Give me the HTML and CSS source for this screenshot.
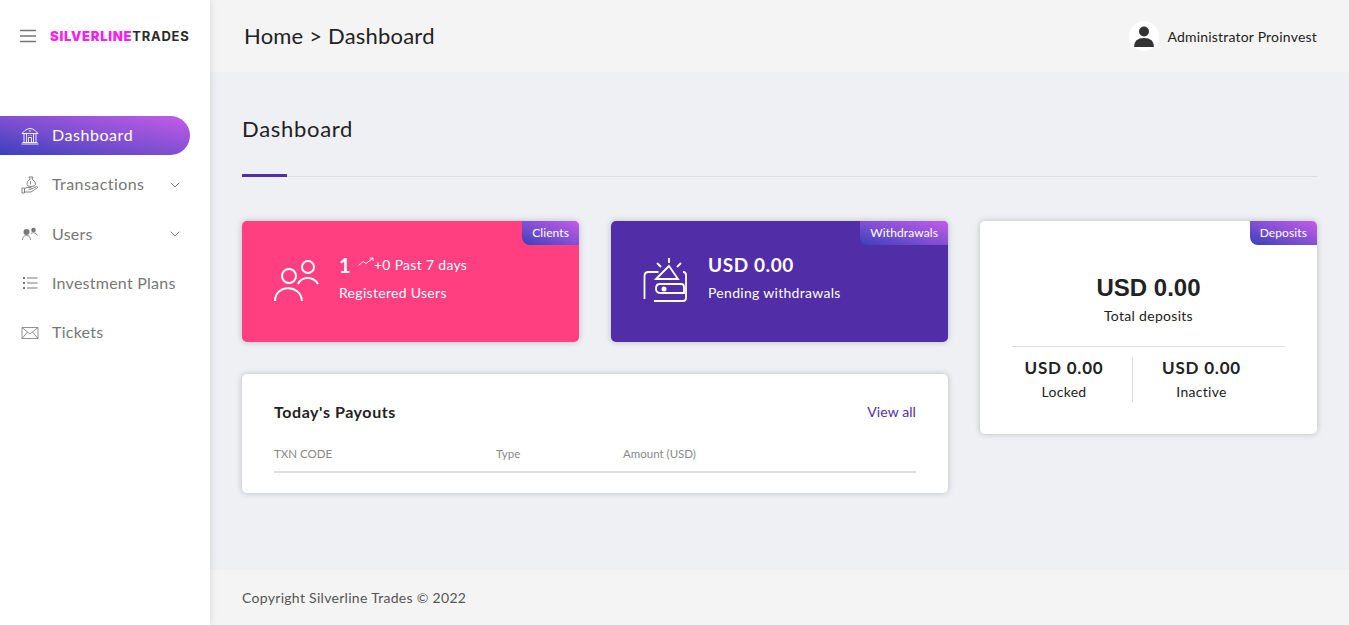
FILE: index.html
```html
<!DOCTYPE html>
<html>
    <head>
        <title>Dashboard</title>
        <link rel="stylesheet" href="styles.css">
    </head>
    <body>
        <div class="layout">
            <aside class="sidebar">
                <div class="brand">
                    <svg class="burger" width="16" height="14" viewBox="0 0 16 14"><path d="M0 1.5h16M0 7h16M0 12.5h16" stroke="#777" stroke-width="1.6" fill="none"/></svg>
                    <span class="logo"><b>SILVERLINE</b>TRADES</span>
                </div>
                <ul class="menu">
                    <li class="menu-item active">
                        <svg class="menu-icon" viewBox="0 0 18 18" fill="none" stroke="currentColor" stroke-width=".9"><path d="M1 6.5 4 3.5Q9-.5 14 3.500l3 3zM3 6.500v9M5.500 6.500v9M12.500 6.500v9M15 6.500v9M7.500 15.500v-5h3v5M7.500 8.500h.8M9.700 8.500h.8M9 3v2M1.500 15.500h15M.5 17h17"/></svg>
                        <span>Dashboard</span>
                    </li>
                    <li class="menu-item">
                        <svg class="menu-icon" viewBox="0 0 18 18" fill="none" stroke="currentColor" stroke-width=".9"><path d="M8 1h4l-1 2q4 2.500 3.500 5.500-.5 2-4.500 2T6 8.500Q5.500 5.500 9 3zM9.500 5v3.500"/><path d="M3.500 12.500 6 11.500h4q1 .8 0 1.800H7.500M10.500 13l5-2.500q1.500 0 .8 1.300L10 16H3.500M1 12v5h2.500v-5z"/></svg>
                        <span class="menu-wide">Transactions</span>
                        <svg class="chevron" width="10" height="6" viewBox="0 0 10 6"><path d="M.7.7 5 5l4.300-4.300" stroke="#777" stroke-width="1" fill="none"/></svg>
                    </li>
                    <li class="menu-item">
                        <svg class="menu-icon" viewBox="0 0 18 18"><circle cx="5.500" cy="7" r="3" fill="currentColor"/><circle cx="12.500" cy="5" r="2.300" fill="currentColor"/><path d="M1.500 15q0-4.500 4-4.500t4 4.500M10 8.500q1-.8 2.500-.8 3 0 4 3" fill="none" stroke="currentColor" stroke-width=".8"/></svg>
                        <span>Users</span>
                        <svg class="chevron" width="10" height="6" viewBox="0 0 10 6"><path d="M.7.7 5 5l4.300-4.300" stroke="#777" stroke-width="1" fill="none"/></svg>
                    </li>
                    <li class="menu-item">
                        <svg class="menu-icon" viewBox="0 0 18 18"><path d="M6 4h10.500M6 9h10.500M6 14h10.500" stroke="currentColor" stroke-width="1.200"/><path d="M2 4h2M2 9h2M2 14h2" stroke="currentColor" stroke-width="2"/></svg>
                        <span>Investment Plans</span>
                    </li>
                    <li class="menu-item">
                        <svg class="menu-icon" viewBox="0 0 18 18" fill="none" stroke="currentColor" stroke-width=".8"><path d="M1 3.500h16v11H1zM1 3.500l8 6.500 8-6.500M1 14.500l5.500-6.500M17 14.500 11.500 8"/></svg>
                        <span>Tickets</span>
                    </li>
                </ul>
            </aside>
            <div class="page">
                <header class="topbar">
                    <div class="crumbs">Home &gt; Dashboard</div>
                    <div class="user">
                        <span class="avatar">
                            <svg width="30" height="30" viewBox="0 0 30 30"><circle cx="15" cy="10.500" r="5" fill="#333"/><path d="M5 26q0-9 10-9t10 9z" fill="#333"/></svg>
                        </span>
                        <span>Administrator Proinvest</span>
                    </div>
                </header>
                <main class="content">
                    <h1 class="page-title">Dashboard</h1>
                    <div class="title-rule"></div>
                    <div class="cards">
                        <div class="left-col">
                            <div class="card stat-card pink">
                                <span class="tag">Clients</span>
                                <svg class="stat-icon users-icon" width="46" height="46" viewBox="0 0 46 46" fill="none" stroke="#fff" stroke-width="2"><circle cx="15" cy="18" r="7"/><circle cx="34" cy="9" r="6"/><path d="M1 43c0-17 26-17 27 0M24 26c4-8 15-8 20 0"/></svg>
                                <div class="stat-text">
                                    <div class="stat-main">
                                        <span class="stat-num">1</span>
                                        <svg class="trend" width="16" height="10" viewBox="0 0 16 10" fill="none" stroke="#fff" stroke-width=".9"><path d="M.5 8.500 5 4.500l3 2L15 1M11.500 1H15v3"/></svg>
                                        <span class="stat-past">+0 Past 7 days</span>
                                    </div>
                                    <div class="stat-label">Registered Users</div>
                                </div>
                            </div>
                            <div class="card stat-card purple">
                                <span class="tag">Withdrawals</span>
                                <svg class="stat-icon" width="46" height="46" viewBox="0 0 46 46" fill="none" stroke="#fff" stroke-width="1.800"><path d="M1.500 41V18q0-4 4-4h10M26 5V0M14 5l4 4M38 5l-4 4M13 21 26 8l9 13zM40 14q3 0 3 3v23q0 3-3 3H11M17 26h21q3 0 3 3v6H17q-4 0-4-4.500T17 26z"/><circle cx="21" cy="31" r="1.600" fill="#fff"/></svg>
                                <div class="stat-text">
                                    <div class="stat-main"><span class="stat-usd">USD 0.00</span></div>
                                    <div class="stat-label">Pending withdrawals</div>
                                </div>
                            </div>
                            <div class="card payouts">
                                <div class="payouts-head">
                                    <h3>Today's Payouts</h3>
                                    <a href="#">View all</a>
                                </div>
                                <div class="payouts-cols">
                                    <span class="col-code">TXN CODE</span>
                                    <span class="col-type">Type</span>
                                    <span>Amount (USD)</span>
                                </div>
                            </div>
                        </div>
                        <div class="card deposits">
                            <span class="tag">Deposits</span>
                            <div class="dep-total">USD 0.00</div>
                            <div class="dep-label">Total deposits</div>
                            <div class="dep-split">
                                <div class="dep-col">
                                    <div class="dep-usd">USD 0.00</div>
                                    <div class="dep-small">Locked</div>
                                </div>
                                <div class="dep-col">
                                    <div class="dep-usd">USD 0.00</div>
                                    <div class="dep-small">Inactive</div>
                                </div>
                            </div>
                        </div>
                    </div>
                </main>
                <footer class="footer">Copyright Silverline Trades © 2022</footer>
            </div>
        </div>
    </body>
</html>
```

FILE: styles.css
```css
*{
    box-sizing:border-box;
}
body{
    margin:0;
    font-family:"Lato","Liberation Sans",sans-serif;
    letter-spacing:.3px;
    color:#222;
    background:#eff0f4;
}
.layout{
    display:flex;
    height:625px;
    overflow:hidden;
}
.sidebar{
    width:210px;
    flex:none;
    background:#fff;
    box-shadow:0 0 8px rgba(0,0,0,.12);
    position:relative;
}
.brand{
    display:flex;
    align-items:center;
    height:72px;
    padding-left:20px;
}
.burger{
    margin-right:14px;
}
.logo{
    font-family:"Inter",sans-serif;
    font-weight:700;
    font-size:13px;
    letter-spacing:.75px;
    color:#2b2b2b;
}
.logo b{
    color:#f81ff0;
}
.menu{
    list-style:none;
    margin:44px 0 0;
    padding:0;
}
.menu-item{
    display:flex;
    align-items:center;
    width:190px;
    height:39px;
    margin-bottom:10.3px;
    padding-left:21px;
    font-size:16px;
    letter-spacing:.25px;
    color:#777;
}
.menu-item span{
    padding-bottom:2px;
}
.menu-item .menu-wide{
    letter-spacing:.42px;
}
.menu-item.active{
    color:#fff;
    letter-spacing:.55px;
    background:linear-gradient(to top right,#3a40bd,#7c4fd0 45%,#c45ce8);
    border-radius:0 20px 20px 0;
}
.menu-icon{
    width:18px;
    height:18px;
    margin-right:13px;
    flex:none;
}
.chevron{
    margin-left:auto;
    margin-right:10px;
}
.page{
    flex:1;
    display:flex;
    flex-direction:column;
    min-width:0;
}
.topbar{
    height:72px;
    flex:none;
    background:#f4f4f4;
    display:flex;
    align-items:center;
    justify-content:space-between;
    padding:0 32px 0 34px;
}
.crumbs{
    font-size:22px;
    letter-spacing:.2px;
    padding-bottom:2px;
}
.user{
    display:flex;
    align-items:center;
    font-size:14px;
    letter-spacing:.2px;
}
.avatar{
    width:30px;
    height:30px;
    background:#fff;
    border-radius:50%;
    margin-right:8px;
    display:block;
}
.avatar svg{
    display:block;
}
.content{
    flex:1;
    padding:43px 32px 0;
}
.page-title{
    margin:0;
    font-size:22px;
    line-height:28px;
    font-weight:400;
    letter-spacing:.7px;
}
.title-rule{
    height:1px;
    background:#dcdde3;
    margin-top:33px;
    position:relative;
}
.title-rule:before{
    content:"";
    position:absolute;
    left:0;
    top:-2px;
    width:45px;
    height:3px;
    background:#512da8;
}
.cards{
    display:grid;
    grid-template-columns:706px 337px;
    gap:32px;
    margin-top:44px;
    align-items:start;
}
.left-col{
    display:grid;
    grid-template-columns:337px 337px;
    gap:32px;
}
.card{
    position:relative;
    background:#fff;
    border-radius:5px;
    box-shadow:0 0 6px rgba(0,0,0,.22);
    overflow:hidden;
}
.tag{
    position:absolute;
    top:0;
    right:0;
    height:24px;
    line-height:24px;
    padding:0 10px;
    font-size:12px;
    letter-spacing:.1px;
    color:#fff;
    background:linear-gradient(to top right,#3a40bd,#7c4fd0 45%,#c45ce8);
    border-bottom-left-radius:8px;
}
.stat-card{
    height:121px;
    display:flex;
    align-items:center;
    padding:0 0 0 32px;
    color:#fff;
}
.pink{
    background:#ff3f7f;
}
.purple{
    background:#512da8;
}
.stat-icon{
    flex:none;
    margin-right:19px;
    margin-top:-2px;
}
.stat-text{
    margin-bottom:11px;
}
.stat-main{
    display:flex;
    align-items:center;
    height:26px;
}
.stat-num{
    font-size:20px;
    font-weight:700;
    margin-right:7px;
}
.trend{
    margin-right:0;
    margin-top:-6px;
}
.stat-past{
    font-size:14px;
}
.stat-usd{
    font-size:19px;
    font-weight:700;
    letter-spacing:.6px;
}
.stat-label{
    font-size:14px;
    margin-top:6px;
}
.payouts{
    grid-column:span 2;
    height:119px;
    padding:28px 32px 0;
}
.payouts-head{
    display:flex;
    justify-content:space-between;
    align-items:center;
}
.payouts-head h3{
    margin:0;
    font-size:16px;
    font-weight:700;
    line-height:20px;
    letter-spacing:.57px;
}
.payouts-head a{
    font-size:14px;
    letter-spacing:.1px;
    color:#512da8;
    text-decoration:none;
    padding-bottom:2px;
}
.payouts-cols{
    display:flex;
    margin-top:24px;
    padding-bottom:9px;
    font-size:11.5px;
    letter-spacing:0;
    line-height:16px;
    color:#888;
    border-bottom:2px solid #dedede;
}
.col-code{
    width:222px;
}
.col-type{
    width:127px;
}
.deposits{
    height:213px;
    padding:52px 32px 0;
    text-align:center;
}
.dep-total{
    font-family:"Liberation Sans",sans-serif;
    font-size:24px;
    font-weight:700;
    line-height:30px;
    letter-spacing:0;
}
.dep-label{
    font-size:14px;
    margin-top:3px;
    line-height:20px;
    padding-bottom:20px;
    border-bottom:1px solid #dcdde3;
}
.dep-split{
    display:grid;
    grid-template-columns:137px 137px;
    margin:10px 0 0 -16px;
    height:45px;
}
.dep-col:first-child{
    border-right:1px solid #dcdde3;
}
.dep-usd{
    font-size:17px;
    font-weight:700;
    line-height:22px;
    letter-spacing:.8px;
}
.dep-small{
    font-size:14px;
    line-height:20px;
    margin-top:3px;
}
.footer{
    height:55px;
    flex:none;
    background:#f4f4f4;
    display:flex;
    align-items:center;
    padding-left:32px;
    font-size:14px;
    color:#555;
}
```
